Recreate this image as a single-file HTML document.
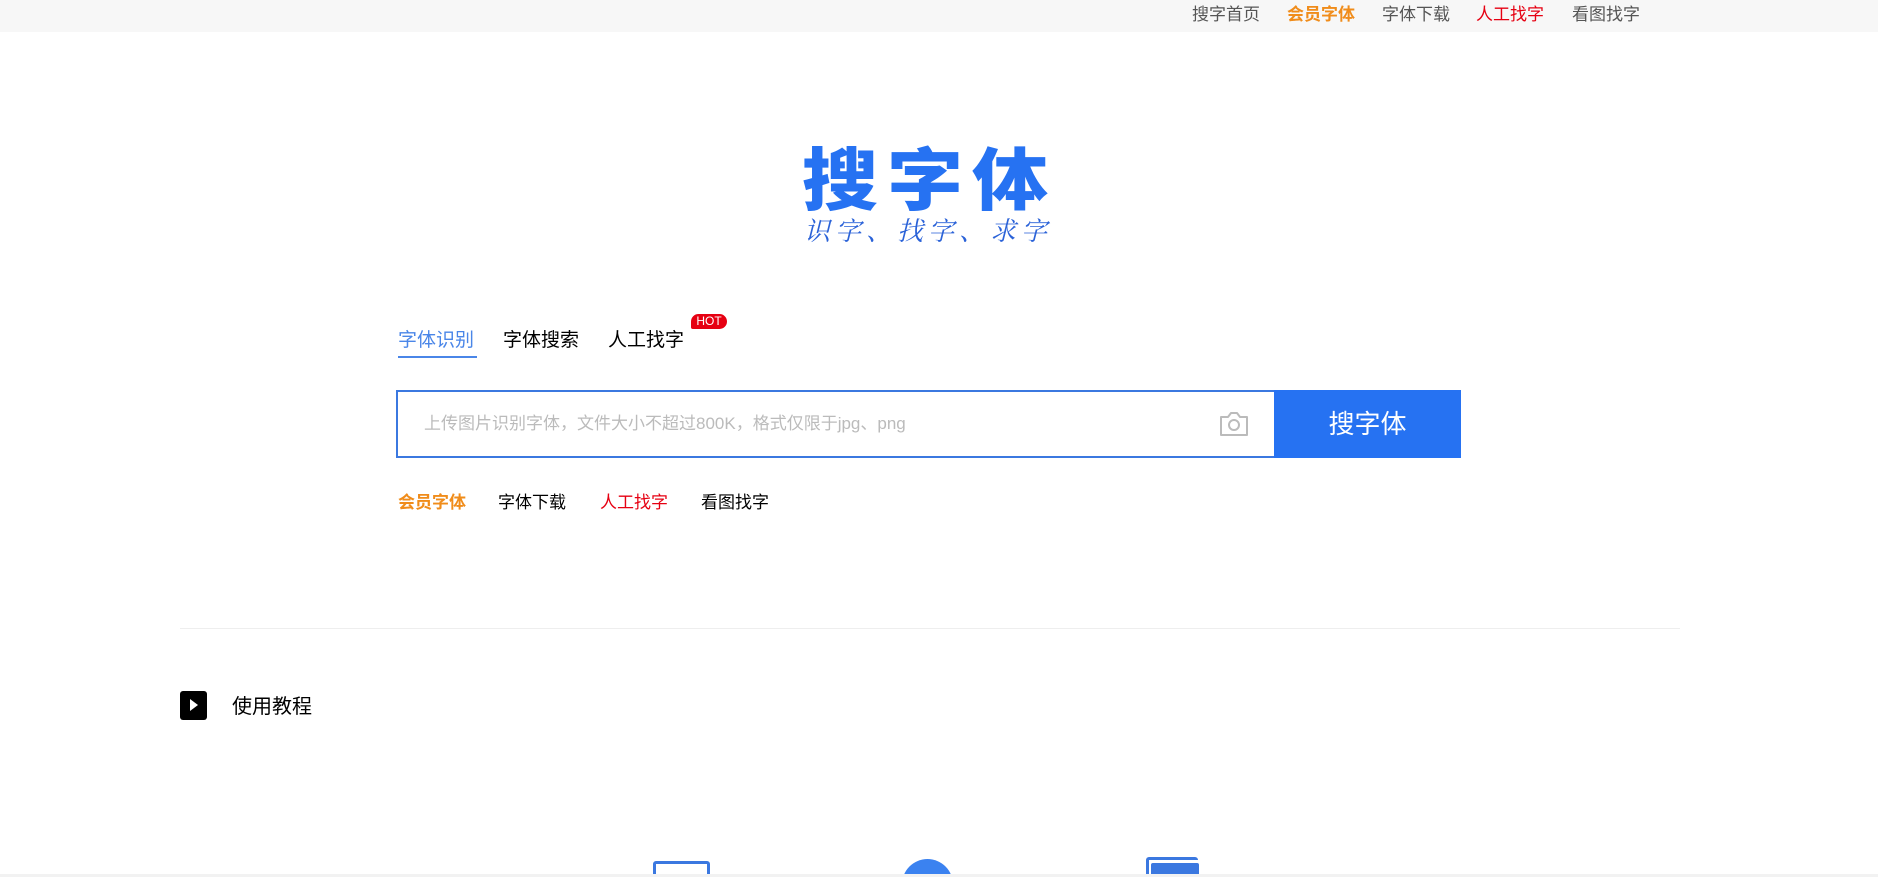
<!DOCTYPE html>
<html style="overflow:hidden;width:1878px;height:877px"><head><meta charset="utf-8"><style>
*{margin:0;padding:0;box-sizing:border-box}
body{width:1878px;height:877px;overflow:hidden;background:#fff;font-family:"Liberation Sans","Noto Sans CJK SC",sans-serif;position:relative}
.a{position:absolute;white-space:nowrap}
.top{position:absolute;left:0;top:0;width:1878px;height:32px;background:#f7f7f7}
.nav{font-size:17px;top:4px;color:#555;line-height:22px}
</style></head><body>
<div class="top"></div>
<div class="a nav" style="left:1192px">搜字首页</div>
<div class="a nav" style="left:1287px;color:#f08c1a;font-weight:bold">会员字体</div>
<div class="a nav" style="left:1382px">字体下载</div>
<div class="a nav" style="left:1476px;color:#e60012">人工找字</div>
<div class="a nav" style="left:1572px">看图找字</div>

<div class="a" style="left:802px;top:130px;font-size:76px;line-height:90px;font-weight:900;color:#2672f2;letter-spacing:9px;font-family:'Noto Sans CJK SC',sans-serif;transform:scaleY(0.9)">搜字体</div>
<div class="a" style="left:804px;top:212px;font-size:26px;line-height:36px;color:#2a62d8;font-style:italic;font-family:'Noto Serif CJK SC',serif;letter-spacing:5px">识字、找字、求字</div>

<div class="a" style="left:398px;top:328px;font-size:19px;line-height:26px;color:#4a86e8">字体识别</div>
<div class="a" style="left:398px;top:356px;width:79px;height:2px;background:#4a86e8"></div>
<div class="a" style="left:503px;top:328px;font-size:19px;line-height:26px;color:#000">字体搜索</div>
<div class="a" style="left:608px;top:328px;font-size:19px;line-height:26px;color:#000">人工找字</div>
<div class="a" style="left:691px;top:314px;width:36px;height:15px;background:#e60012;color:#fff;font-size:12px;line-height:15px;text-align:center;border-radius:8px 8px 8px 2px">HOT</div>

<div class="a" style="left:396px;top:390px;width:880px;height:68px;border:2px solid #3b78e0;border-right:none"></div>
<div class="a" style="left:424px;top:413px;font-size:17px;line-height:22px;color:#bbb">上传图片识别字体，文件大小不超过800K，格式仅限于jpg、png</div>
<svg class="a" style="left:1218px;top:410px" width="32" height="28" viewBox="0 0 32 28"><path d="M3 7h7l3-4h6l3 4h7v18H3z" fill="none" stroke="#bbb" stroke-width="2" stroke-linejoin="round"/><circle cx="16" cy="15" r="5" fill="none" stroke="#bbb" stroke-width="2"/></svg>
<div class="a" style="left:1274px;top:390px;width:187px;height:68px;background:#2672f2;color:#fff;font-size:26px;line-height:68px;text-align:center">搜字体</div>

<div class="a" style="left:398px;top:492px;font-size:17px;line-height:22px;color:#f08c1a;font-weight:bold">会员字体</div>
<div class="a" style="left:498px;top:492px;font-size:17px;line-height:22px;color:#000">字体下载</div>
<div class="a" style="left:600px;top:492px;font-size:17px;line-height:22px;color:#e60012">人工找字</div>
<div class="a" style="left:701px;top:492px;font-size:17px;line-height:22px;color:#000">看图找字</div>

<div class="a" style="left:180px;top:628px;width:1500px;height:1px;background:#eee"></div>

<div class="a" style="left:180px;top:691px;width:27px;height:29px;background:#000;border-radius:3px"></div>
<div class="a" style="left:190px;top:699px;width:0;height:0;border-left:8px solid #fff;border-top:6px solid transparent;border-bottom:6px solid transparent"></div>
<div class="a" style="left:232px;top:694px;font-size:20px;line-height:26px;color:#000">使用教程</div>

<div class="a" style="left:0;top:855px;width:1878px;height:22px;overflow:hidden">
<div class="a" style="left:653px;top:6px;width:57px;height:30px;border:3px solid #3b78e0;border-radius:3px"></div>
<div class="a" style="left:902px;top:4px;width:51px;height:51px;background:#3b82f0;border-radius:50%"></div>
<div class="a" style="left:1146px;top:2px;width:52px;height:30px;border-top:3px solid #3b78e0;border-left:3px solid #3b78e0;border-radius:3px"></div>
<div class="a" style="left:1151px;top:8px;width:48px;height:30px;background:#3b78e0;border-radius:2px"></div>
<div class="a" style="left:0;top:19px;width:1878px;height:3px;background:#f2f2f2"></div>
</div>
</body></html>
